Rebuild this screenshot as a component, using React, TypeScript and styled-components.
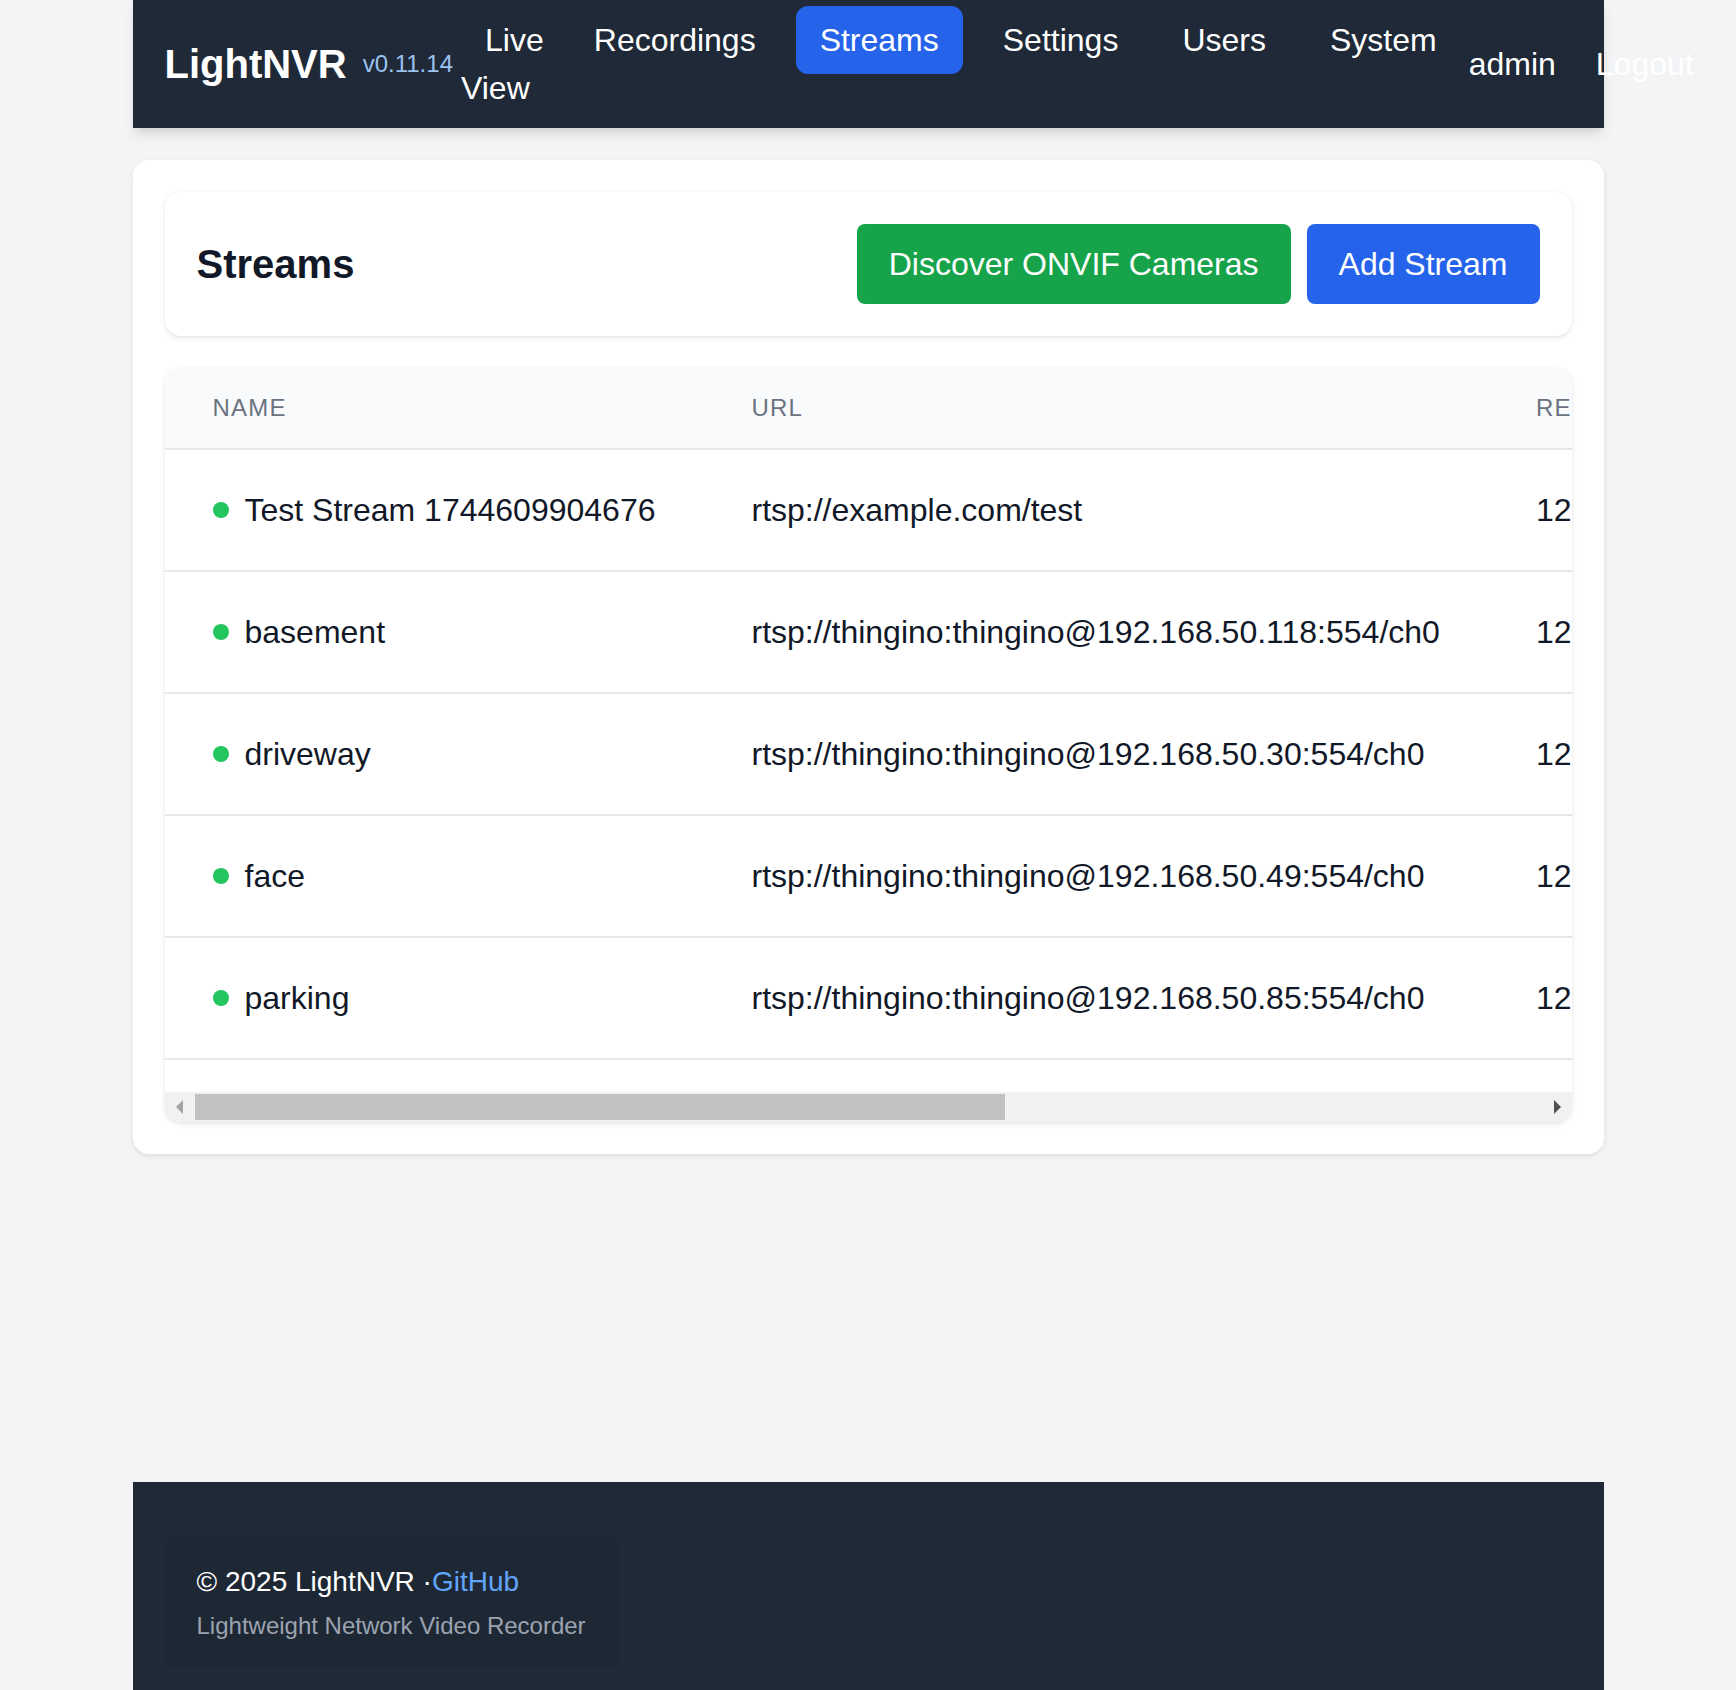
import React from "react";
import styled, { createGlobalStyle, css } from "styled-components";
import { Pencil, Play, Trash2, Copy } from "lucide-react";

const GlobalStyle = createGlobalStyle`
  html, body {
    margin: 0;
    padding: 0;
  }
  body {
    background: #f3f4f6;
    font-family: "Liberation Sans", Arial, Helvetica, sans-serif;
    color: #111827;
  }
  * { box-sizing: border-box; }
`;

const Shell = styled.div`
  width: 1471px;
  margin: 0 auto;
  min-height: 100vh;
  display: flex;
  flex-direction: column;
`;

const TopBar = styled.header`
  background: #1f2937;
  padding: 16px 32px;
  display: flex;
  align-items: center;
  justify-content: space-between;
  gap: 8px;
  box-shadow: 0 8px 12px -2px rgba(0, 0, 0, 0.1), 0 4px 8px -4px rgba(0, 0, 0, 0.1);
  position: relative;
  z-index: 1;
`;

const Brand = styled.div`
  display: flex;
  align-items: center;
  gap: 16px;
  white-space: nowrap;
`;

const BrandName = styled.span`
  font-size: 40px;
  line-height: 56px;
  font-weight: 700;
  color: #ffffff;
`;

const Version = styled.span`
  font-size: 24px;
  line-height: 32px;
  color: #9cc2f0;
`;

const NavList = styled.ul`
  display: flex;
  gap: 16px;
  margin: 0;
  padding: 0;
  list-style: none;
  font-size: 32px;
  line-height: 48px;
`;

const NavItem = styled.li`
  margin: 0;
`;

const NavLink = styled.a<{ $active?: boolean }>`
  display: inline;
  padding: 16px 24px;
  color: #ffffff;
  text-decoration: none;
  border-radius: 12px;
  ${(p) =>
    p.$active &&
    css`
      background: #2563eb;
    `}
`;

const UserMenu = styled.div`
  display: flex;
  align-items: center;
  gap: 16px;
  font-size: 32px;
  line-height: 48px;
  color: #ffffff;
  white-space: nowrap;
`;

const UserName = styled.span``;

const LogoutLink = styled.a`
  display: inline;
  padding: 16px 24px;
  color: #ffffff;
  text-decoration: none;
`;

const Main = styled.main`
  flex: 1;
  padding-top: 32px;
`;

const Card = styled.section`
  background: #ffffff;
  border-radius: 16px;
  box-shadow: 0 2px 6px rgba(0, 0, 0, 0.08), 0 2px 4px -2px rgba(0, 0, 0, 0.06);
  padding: 32px;
  display: flex;
  flex-direction: column;
  gap: 32px;
`;

const PageHeader = styled.div`
  display: flex;
  align-items: center;
  justify-content: space-between;
  padding: 32px;
  border-radius: 16px;
  background: #ffffff;
  box-shadow: 0 2px 6px rgba(0, 0, 0, 0.08), 0 1px 3px rgba(0, 0, 0, 0.05);
`;

const PageTitle = styled.h1`
  margin: 0;
  font-size: 40px;
  line-height: 56px;
  font-weight: 700;
  color: #111827;
`;

const ButtonRow = styled.div`
  display: flex;
  gap: 16px;
`;

const ActionButton = styled.button<{ $variant: "green" | "blue" }>`
  border: none;
  border-radius: 8px;
  padding: 16px 32px;
  font-family: inherit;
  font-size: 32px;
  line-height: 48px;
  color: #ffffff;
  cursor: pointer;
  background: ${(p) => (p.$variant === "green" ? "#16a34a" : "#2563eb")};
`;

const TableCard = styled.div`
  border-radius: 16px;
  overflow: hidden;
  background: #ffffff;
  box-shadow: 0 2px 6px rgba(0, 0, 0, 0.08), 0 1px 3px rgba(0, 0, 0, 0.05);
`;

const Scroller = styled.div`
  overflow: hidden;
  padding-bottom: 32px;
`;

const ScrollBar = styled.div`
  display: flex;
  height: 30px;
  background: #f1f1f1;
`;

const ScrollArrow = styled.span<{ $dir: "left" | "right"; $enabled: boolean }>`
  width: 30px;
  flex: none;
  position: relative;

  &::after {
    content: "";
    position: absolute;
    top: 8px;
    left: ${(p) => (p.$dir === "left" ? "11px" : "12px")};
    border-top: 7px solid transparent;
    border-bottom: 7px solid transparent;
    ${(p) =>
      p.$dir === "left"
        ? css`
            border-right: 7px solid ${p.$enabled ? "#505050" : "#a3a3a3"};
          `
        : css`
            border-left: 7px solid ${p.$enabled ? "#505050" : "#a3a3a3"};
          `}
  }
`;

const ScrollTrack = styled.div`
  flex: 1;
  display: flex;
  padding: 2px 0;
`;

const ScrollThumb = styled.div<{ $ratio: number }>`
  width: ${(p) => p.$ratio * 100}%;
  background: #c1c1c1;
`;

const Table = styled.table`
  border-collapse: collapse;
  min-width: 100%;
  white-space: nowrap;
`;

const HeadCell = styled.th`
  background: #f9fafb;
  padding: 24px 48px;
  font-size: 24px;
  line-height: 32px;
  font-weight: 500;
  text-align: left;
  color: #6b7280;
  letter-spacing: 0.05em;
  text-transform: uppercase;
  border-bottom: 2px solid #e5e7eb;
`;

const Row = styled.tr`
  border-bottom: 2px solid #e5e7eb;
`;

const BodyCell = styled.td`
  padding: 32px 48px;
  font-size: 32px;
  line-height: 48px;
  color: #111827;
  vertical-align: middle;
`;

const NameWrap = styled.div`
  display: flex;
  align-items: center;
  gap: 16px;
`;

const StatusDot = styled.span<{ $online: boolean }>`
  width: 16px;
  height: 16px;
  border-radius: 50%;
  flex: none;
  background: ${(p) => (p.$online ? "#22c55e" : "#ef4444")};
`;

const IconGroup = styled.div`
  display: flex;
  gap: 8px;
`;

const IconButton = styled.button<{ $tone: string }>`
  width: 56px;
  height: 56px;
  padding: 8px;
  border: none;
  border-radius: 8px;
  background: transparent;
  color: ${(p) => p.$tone};
  display: flex;
  align-items: center;
  justify-content: center;
`;

const Footer = styled.footer`
  background: #1f2937;
  padding: 56px 32px 24px;
`;

const FooterBox = styled.div`
  width: fit-content;
  padding: 24px 32px;
  background: #1e2835;
  box-shadow: 0 1px 2px rgba(0, 0, 0, 0.04);
`;

const FooterLine = styled.p`
  margin: 0;
  font-size: 28px;
  line-height: 40px;
  color: #ffffff;
`;

const FooterLink = styled.a`
  color: #60a5fa;
  text-decoration: none;
`;

const FooterTagline = styled.p`
  margin: 8px 0 0;
  font-size: 24px;
  line-height: 32px;
  color: #9ca3af;
`;

type Stream = {
  name: string;
  url: string;
  resolution: string;
  fps: number;
  recording: string;
};

const streams: Stream[] = [
  { name: "Test Stream 1744609904676", url: "rtsp://example.com/test", resolution: "1280x720", fps: 15, recording: "Enabled" },
  { name: "basement", url: "rtsp://thingino:thingino@192.168.50.118:554/ch0", resolution: "1280x720", fps: 15, recording: "Enabled" },
  { name: "driveway", url: "rtsp://thingino:thingino@192.168.50.30:554/ch0", resolution: "1280x720", fps: 15, recording: "Enabled" },
  { name: "face", url: "rtsp://thingino:thingino@192.168.50.49:554/ch0", resolution: "1280x720", fps: 15, recording: "Enabled" },
  { name: "parking", url: "rtsp://thingino:thingino@192.168.50.85:554/ch0", resolution: "1280x720", fps: 15, recording: "Enabled" },
];

const navItems = ["Live View", "Recordings", "Streams", "Settings", "Users", "System"];

export default function App() {
  const scrollerRef = React.useRef<HTMLDivElement>(null);
  const [ratio, setRatio] = React.useState(0.6);

  React.useLayoutEffect(() => {
    const el = scrollerRef.current;
    if (el && el.scrollWidth > 0) {
      setRatio(Math.min(1, el.clientWidth / (el.scrollWidth + 6)));
    }
  }, []);

  return (
    <>
      <GlobalStyle />
      <Shell>
        <TopBar>
          <Brand>
            <BrandName>LightNVR</BrandName>
            <Version>v0.11.14</Version>
          </Brand>
          <nav>
            <NavList>
              {navItems.map((item) => (
                <NavItem key={item}>
                  <NavLink href="#" $active={item === "Streams"}>
                    {item}
                  </NavLink>
                </NavItem>
              ))}
            </NavList>
          </nav>
          <UserMenu>
            <UserName>admin</UserName>
            <LogoutLink href="#">Logout</LogoutLink>
          </UserMenu>
        </TopBar>

        <Main>
          <Card>
            <PageHeader>
              <PageTitle>Streams</PageTitle>
              <ButtonRow>
                <ActionButton $variant="green">Discover ONVIF Cameras</ActionButton>
                <ActionButton $variant="blue">Add Stream</ActionButton>
              </ButtonRow>
            </PageHeader>

            <TableCard>
              <Scroller ref={scrollerRef}>
                <Table>
                  <thead>
                    <tr>
                      <HeadCell>Name</HeadCell>
                      <HeadCell>URL</HeadCell>
                      <HeadCell>Resolution</HeadCell>
                      <HeadCell>FPS</HeadCell>
                      <HeadCell>Recording</HeadCell>
                      <HeadCell>Actions</HeadCell>
                    </tr>
                  </thead>
                  <tbody>
                    {streams.map((s) => (
                      <Row key={s.name}>
                        <BodyCell>
                          <NameWrap>
                            <StatusDot $online />
                            {s.name}
                          </NameWrap>
                        </BodyCell>
                        <BodyCell>{s.url}</BodyCell>
                        <BodyCell>{s.resolution}</BodyCell>
                        <BodyCell>{s.fps}</BodyCell>
                        <BodyCell>{s.recording}</BodyCell>
                        <BodyCell>
                          <IconGroup>
                            <IconButton $tone="#16a34a" aria-label="Test">
                              <Play size={40} />
                            </IconButton>
                            <IconButton $tone="#2563eb" aria-label="Edit">
                              <Pencil size={40} />
                            </IconButton>
                            <IconButton $tone="#6b7280" aria-label="Clone">
                              <Copy size={40} />
                            </IconButton>
                            <IconButton $tone="#dc2626" aria-label="Delete">
                              <Trash2 size={40} />
                            </IconButton>
                          </IconGroup>
                        </BodyCell>
                      </Row>
                    ))}
                  </tbody>
                </Table>
              </Scroller>
              <ScrollBar>
                <ScrollArrow $dir="left" $enabled={false} />
                <ScrollTrack>
                  <ScrollThumb $ratio={ratio} />
                </ScrollTrack>
                <ScrollArrow $dir="right" $enabled />
              </ScrollBar>
            </TableCard>
          </Card>
        </Main>

        <Footer>
          <FooterBox>
            <FooterLine>
              © 2025 LightNVR ·<FooterLink href="#">GitHub</FooterLink>
            </FooterLine>
            <FooterTagline>Lightweight Network Video Recorder</FooterTagline>
          </FooterBox>
        </Footer>
      </Shell>
    </>
  );
}
